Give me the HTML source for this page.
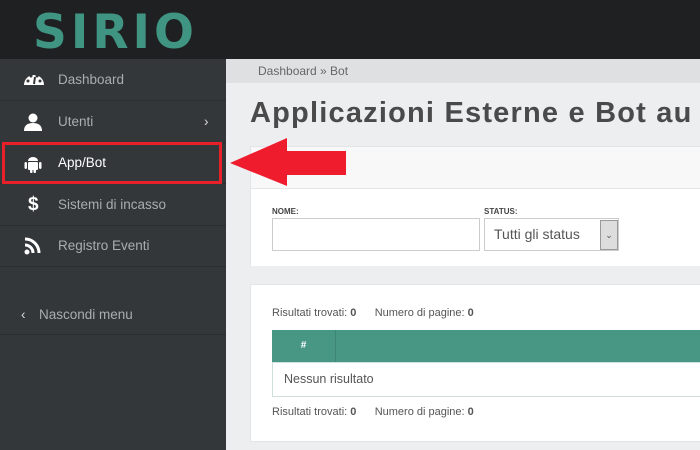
<!DOCTYPE html>
<html><head><meta charset="utf-8"><style>
*{margin:0;padding:0;box-sizing:border-box}
body{width:700px;height:450px;overflow:hidden;background:#eceef0;font-family:"Liberation Sans","DejaVu Sans",sans-serif;position:relative}
.top{position:absolute;left:0;top:0;width:700px;height:59px;background:#1f2022}
.logo{position:absolute;left:33px;top:5px;font-size:47px;font-weight:bold;color:#3f9482;letter-spacing:4px;font-family:"DejaVu Sans",sans-serif}
.side{position:absolute;left:0;top:59px;width:226px;height:391px;background:#33373a}
.it{position:absolute;left:0;width:226px;height:42px;border-bottom:1px solid #2b2e31;color:#a9adb2;font-size:13.5px;line-height:42px;padding-left:58px}
.it.act{color:#fff}
.it svg{position:absolute;left:23px;top:12px}
.crumb{position:absolute;left:226px;top:59px;width:474px;height:24px;background:#dfe0e2;color:#666;font-size:12px;line-height:24px;padding-left:32px}
h1{position:absolute;left:250px;top:97px;font-size:29px;font-weight:bold;color:#4a4a4a;white-space:nowrap;letter-spacing:1.2px}
.p{position:absolute;left:250px;width:460px;background:#fff;border:1px solid #e3e4e6}
.lbl{position:absolute;font-size:8px;font-weight:bold;color:#444}
.sm{position:absolute;font-size:11px;color:#555;white-space:nowrap}
</style></head><body>
<div class="top"><div class="logo">SIRIO</div></div>
<div class="side">
<div class="it" style="top:0"><svg width="22" height="16" viewBox="0 0 22 16"><path d="M1 14A10 10 0 0 1 21 14Z" fill="#fff"/><circle cx="5" cy="10" r="1.5" fill="#33373a"/><circle cx="8" cy="5" r="1.5" fill="#33373a"/><circle cx="14" cy="5" r="1.5" fill="#33373a"/><circle cx="17" cy="10" r="1.5" fill="#33373a"/><path d="M11 13L12 6" stroke="#33373a" stroke-width="2"/></svg>Dashboard</div>
<div class="it" style="top:42px"><svg width="20" height="18" viewBox="0 0 20 18"><circle cx="10" cy="5" r="4.5" fill="#fff"/><path d="M1 18Q1 10 10 10Q19 10 19 18Z" fill="#fff"/></svg>Utenti<span style="position:absolute;left:204px;color:#ddd">›</span></div>
<div class="it act" style="top:83px"><svg width="20" height="20" viewBox="0 0 20 20"><path d="M5 7A5 4 0 0 1 15 7Z" fill="#fff"/><rect x="5" y="8" width="10" height="8" rx="1" fill="#fff"/><rect x="1.5" y="8" width="2.5" height="7" rx="1.2" fill="#fff"/><rect x="16" y="8" width="2.5" height="7" rx="1.2" fill="#fff"/><rect x="7" y="15" width="2.5" height="4" rx="1" fill="#fff"/><rect x="10.5" y="15" width="2.5" height="4" rx="1" fill="#fff"/></svg>App/Bot</div>
<div class="it" style="top:125px"><span style="position:absolute;left:28px;color:#fff;font-weight:bold;font-size:19px">$</span>Sistemi di incasso</div>
<div class="it" style="top:166px"><svg width="20" height="18" viewBox="0 0 20 18"><circle cx="4" cy="15" r="2.5" fill="#fff"/><path d="M2 8A8 8 0 0 1 10 16" stroke="#fff" stroke-width="3" fill="none"/><path d="M2 2A14 14 0 0 1 16 16" stroke="#fff" stroke-width="3" fill="none"/></svg>Registro Eventi</div>
<div class="it" style="top:208px;height:68px;line-height:96px;padding-left:39px"><span style="position:absolute;left:21px;color:#ddd">‹</span>Nascondi menu</div>
</div>
<div style="position:absolute;left:2px;top:142px;width:220px;height:42px;border:3px solid #e8202a"></div>
<div class="crumb">Dashboard » Bot</div>
<h1>Applicazioni Esterne e Bot au</h1>
<div class="p" style="top:146px;height:119px;background:#f8f8f8">
<div style="position:absolute;left:0;top:41px;width:100%;height:78px;background:#fff;border-top:1px solid #e6e6e6"></div>
<div class="lbl" style="left:21px;top:60px">NOME:</div>
<div class="lbl" style="left:233px;top:60px">STATUS:</div>
<div style="position:absolute;left:21px;top:71px;width:208px;height:33px;border:1px solid #ccc;background:#fff"></div>
<div style="position:absolute;left:233px;top:71px;width:135px;height:33px;border:1px solid #ccc;background:#fff;font-size:14px;color:#555;line-height:31px;padding-left:9px">Tutti gli status<span style="position:absolute;right:0;top:1px;width:18px;height:30px;background:#ddd;border:1px solid #999;font-size:9px;text-align:center;line-height:28px">⌄</span></div>
</div>
<div class="p" style="top:284px;height:158px">
<div class="sm" style="left:21px;top:22px">Risultati trovati: <b>0</b>&nbsp;&nbsp;&nbsp;&nbsp;&nbsp;&nbsp;Numero di pagine: <b>0</b></div>
<div style="position:absolute;left:21px;top:45px;width:440px;height:32px;background:#489785"><span style="position:absolute;left:0;width:64px;height:32px;border-right:1px solid #3d8574;color:#fff;font-size:10px;font-weight:bold;text-align:center;line-height:32px">#</span></div>
<div style="position:absolute;left:21px;top:77px;width:440px;height:35px;border:1px solid #cfe0dc;font-size:12.5px;color:#555;line-height:33px;padding-left:11px">Nessun risultato</div>
<div class="sm" style="left:21px;top:121px">Risultati trovati: <b>0</b>&nbsp;&nbsp;&nbsp;&nbsp;&nbsp;&nbsp;Numero di pagine: <b>0</b></div>
</div>
<svg style="position:absolute;left:0;top:0" width="700" height="450"><polygon points="230,163 287,138 287,151 346,151 346,175 287,175 287,186" fill="#ee1c2c"/></svg>
</body></html>
